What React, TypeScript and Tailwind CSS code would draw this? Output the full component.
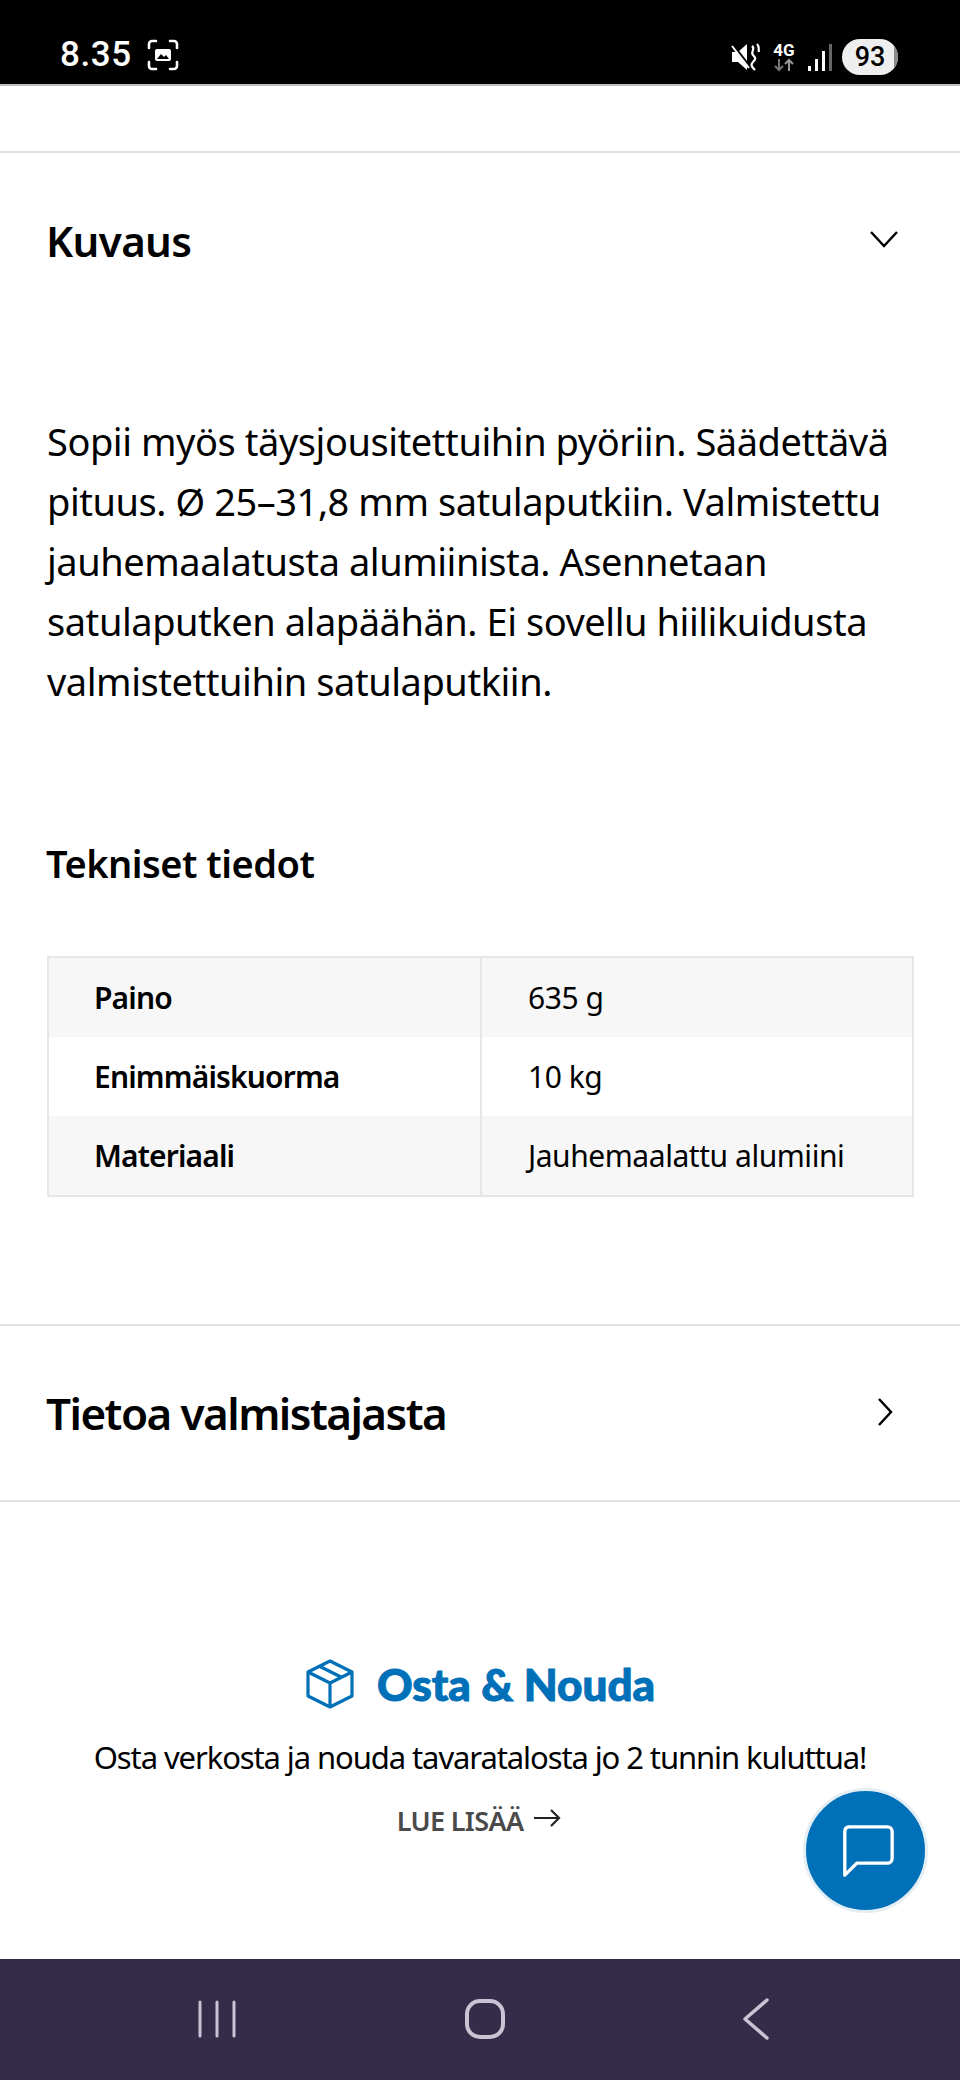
const body = { fontFamily: '"Noto Sans", "Open Sans", sans-serif' };

const specs = [
  { label: 'Paino', value: '635 g', shaded: true },
  { label: 'Enimmäiskuorma', value: '10 kg', shaded: false },
  { label: 'Materiaali', value: 'Jauhemaalattu alumiini', shaded: true },
];

function StatusBar() {
  return (
    <div className="h-[86px] bg-black border-b-2 border-[#bdbdbd] flex items-end justify-between pl-[60px] pr-[62px] pb-[9px] text-white shrink-0">
      <div className="flex items-center gap-[14px]">
        <span className="text-[35px] leading-[40px] font-medium tracking-[0.6px]" style={{ fontFamily: 'Roboto, sans-serif' }}>8.35</span>
        <svg width="34" height="32" viewBox="0 0 32 32" fill="none" stroke="white" strokeWidth="2.6" strokeLinecap="round">
          <path d="M2 9V5a3 3 0 0 1 3-3h4M23 2h4a3 3 0 0 1 3 3v4M30 23v4a3 3 0 0 1-3 3h-4M9 30H5a3 3 0 0 1-3-3v-4" />
          <rect x="8" y="10" width="16" height="12" rx="2" fill="white" stroke="none" />
          <path d="M10 20l4-5 3 3 2-2 3 4z" fill="black" stroke="none" />
        </svg>
      </div>
      <div className="flex items-center gap-[8px]">
        <svg width="30" height="30" viewBox="0 0 30 30" fill="white">
          <path d="M1 10h6l9-8v26l-9-8H1z" />
          <path d="M1 2l20 26" stroke="black" strokeWidth="3" />
          <path d="M1 4l17 22" stroke="white" strokeWidth="2" />
          <path d="M21 4c4 3-2 6 1 9s3 4 0 7-1 5 2 8" fill="none" stroke="white" strokeWidth="2.2" />
          <path d="M26 2c3 3 1 5 2 8" fill="none" stroke="white" strokeWidth="2.2" />
        </svg>
        <div className="flex flex-col items-center w-[24px] ml-[3px]">
          <span className="text-[17px] leading-[16px] font-bold" style={{ fontFamily: 'Roboto, sans-serif' }}>4G</span>
          <svg width="24" height="14" viewBox="0 0 24 14" fill="none" stroke="#777" strokeWidth="2">
            <path d="M7 1v11M3 8l4 4 4-4" />
            <path d="M17 13V2M13 6l4-4 4 4" stroke="#999" />
          </svg>
        </div>
        <div className="flex items-end gap-[4px] h-[27px] ml-[4px]">
          <div className="w-[3px] h-[5px] bg-white" />
          <div className="w-[3px] h-[12px] bg-white" />
          <div className="w-[3px] h-[20px] bg-white" />
          <div className="w-[3px] h-[27px] bg-[#666]" />
        </div>
        <div className="relative w-[56px] h-[36px] rounded-[18px] bg-[#eeeeee] text-black flex items-center justify-center text-[27px] font-medium ml-[2px] overflow-hidden" style={{ fontFamily: 'Roboto, sans-serif' }}>
          93
          <div className="absolute right-0 top-0 bottom-0 w-[4px] bg-[#8a8a8a]" />
        </div>
      </div>
    </div>
  );
}

function NavBar() {
  return (
    <div className="h-[121px] bg-[#352c4a] flex items-start shrink-0 pt-[39px]">
      <div className="flex justify-between items-center w-full pl-[197px] pr-[190px]">
        <svg width="40" height="38" viewBox="0 0 40 38" stroke="#c9c3d3" strokeWidth="3" strokeLinecap="round">
          <path d="M3 2v34M20 2v34M37 2v34" />
        </svg>
        <svg width="40" height="40" viewBox="0 0 40 40" fill="none" stroke="#c9c3d3" strokeWidth="4" className="-ml-[10px]">
          <rect x="2" y="2" width="36" height="36" rx="13" />
        </svg>
        <svg width="28" height="42" viewBox="0 0 28 42" fill="none" stroke="#c9c3d3" strokeWidth="3.5" strokeLinecap="round" strokeLinejoin="round">
          <path d="M25 2L3 21l22 19" />
        </svg>
      </div>
    </div>
  );
}

export default function App() {
  return (
    <div className="relative w-[960px] h-[2080px] bg-white text-black flex flex-col overflow-hidden" style={body}>
      <StatusBar />
      <div className="flex-1 flex flex-col">
        <div className="h-[67px] border-b-2 border-[#e2e2e2]" />
        <div className="px-[47px] pt-[60px]">
          <div className="flex items-center justify-between pr-[14px]">
            <h2 className="text-[42px] leading-[56px] font-semibold tracking-[-0.6px] -ml-[1px]">Kuvaus</h2>
            <svg width="30" height="20" viewBox="0 0 30 20" fill="none" stroke="black" strokeWidth="2.5" className="-mt-[4px]">
              <path d="M2 3l13 14L28 3" />
            </svg>
          </div>
          <p className="mt-[142px] text-[38px] leading-[60px] tracking-[-0.45px] w-[870px] -mr-[4px]">
            Sopii myös täysjousitettuihin pyöriin. Säädettävä pituus. Ø 25–31,8 mm satulaputkiin. Valmistettu jauhemaalatusta alumiinista. Asennetaan satulaputken alapäähän. Ei sovellu hiilikuidusta valmistettuihin satulaputkiin.
          </p>
          <h3 className="mt-[126px] text-[38px] leading-[52px] font-semibold tracking-[-0.5px] -ml-[1px]">Tekniset tiedot</h3>
          <div className="mt-[67px] border-2 border-[#e6e6e6] w-[867px]">
            {specs.map((row) => (
              <div key={row.label} className={`flex h-[79px] items-center ${row.shaded ? 'bg-[#f7f7f7]' : 'bg-white'}`}>
                <div className="w-[433px] h-full flex items-center pl-[45px] border-r-2 border-[#e6e6e6] text-[30px] font-semibold tracking-[-0.85px]">{row.label}</div>
                <div className="pl-[46px] text-[30px] tracking-[-0.45px]">{row.value}</div>
              </div>
            ))}
          </div>
        </div>
        <div className="mt-[127px] h-[178px] border-y-2 border-[#e2e2e2] flex items-center justify-between pl-[46px] pr-[66px]">
          <h2 className="text-[44px] leading-[56px] font-semibold tracking-[-1.55px]">Tietoa valmistajasta</h2>
          <svg width="18" height="30" viewBox="0 0 18 30" fill="none" stroke="black" strokeWidth="2.5" className="-mt-[2px]">
            <path d="M3 2l12 13L3 28" />
          </svg>
        </div>
        <div className="flex flex-col items-center pt-[157px]">
          <div className="flex items-center gap-[22px] text-[#0070b8]">
            <svg width="50" height="50" viewBox="0 0 50 50" fill="none" stroke="#0070b8" strokeWidth="3.2" strokeLinejoin="round">
              <path d="M25 2l22 11v24L25 48 3 37V13z" />
              <path d="M3 13l22 11 22-11M25 24v24M14 7l22 11" />
            </svg>
            <span className="text-[44px] leading-[50px] font-black [-webkit-text-stroke:1px_#0070b8]" style={{ fontFamily: 'Lato, sans-serif' }}>Osta &amp; Nouda</span>
          </div>
          <p className="mt-[26px] text-[31px] leading-[44px] tracking-[-1.1px]">Osta verkosta ja nouda tavaratalosta jo 2 tunnin kuluttua!</p>
          <div className="mt-[22px] flex items-center gap-[10px] -ml-[2px]">
            <span className="text-[27px] leading-[40px] font-semibold text-[#4a4a4a] tracking-[-0.65px]">LUE LISÄÄ</span>
            <svg width="28" height="20" viewBox="0 0 28 20" fill="none" stroke="#222" strokeWidth="2.2" className="-mt-[6px]">
              <path d="M1 10h25M18 2l8 8-8 8" />
            </svg>
          </div>
        </div>
      </div>
      <NavBar />
      <button className="absolute left-[803px] top-[1788px] w-[125px] h-[125px] rounded-full bg-[#0070b8] border-[3px] border-[#e4eef5] flex items-center justify-center">
        <svg width="52" height="52" viewBox="0 0 56 56" fill="none" stroke="white" strokeWidth="3.6" strokeLinejoin="round" className="ml-[4px]">
          <path d="M7 2h42a5 5 0 0 1 5 5v29a5 5 0 0 1-5 5H16L3 54V7a5 5 0 0 1 4-5z" />
        </svg>
      </button>
    </div>
  );
}
